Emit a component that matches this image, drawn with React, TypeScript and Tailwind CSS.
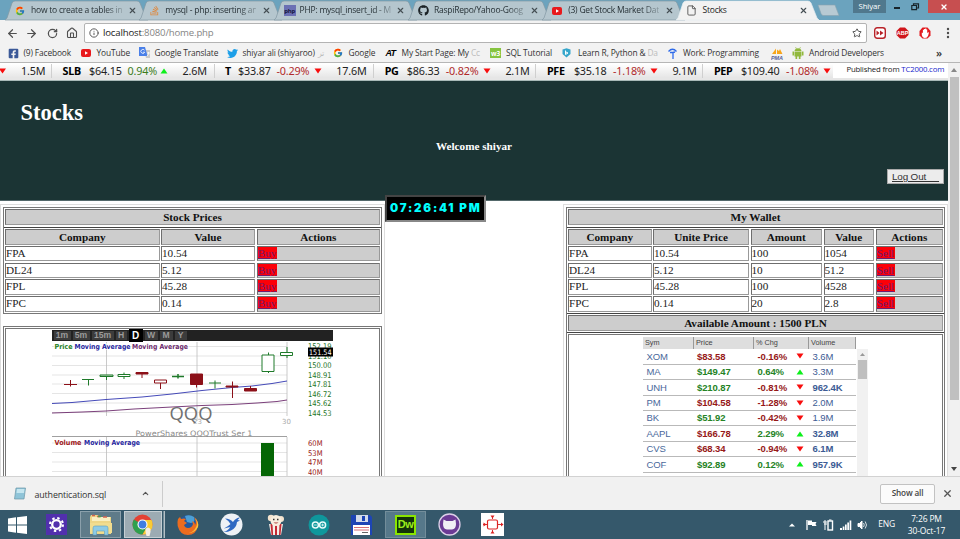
import React from 'react';
import { FcGoogle } from 'react-icons/fc';
import { FaGithub, FaTwitter, FaStackOverflow, FaFacebookSquare } from 'react-icons/fa';
import { ArrowLeft, ArrowRight, RotateCw, House, Info, Star, X, File, ChevronUp } from 'lucide-react';

const ui = "font-['Open_Sans','Noto_Sans',sans-serif]";
const serif = "font-['Liberation_Serif',serif]";
const arial = "font-['Liberation_Sans',sans-serif]";

function YouTube({ className = '' }: { className?: string }) {
  return (
    <svg className={className} viewBox="0 0 20 16" width="10" height="8">
      <rect width="20" height="16" rx="4" fill="#e8191c" />
      <path d="M8 4.5 14 8 8 11.5z" fill="#fff" />
    </svg>
  );
}

function Php() {
  return (
    <span className="flex h-[11px] w-[12px] items-center justify-center bg-[#6b70b4] text-[6px] leading-none font-bold tracking-[-0.2px] text-[#15173c]">
      php
    </span>
  );
}

const tabs = [
  { icon: <FcGoogle size={10} />, title: 'how to create a tables in' },
  { icon: <FaStackOverflow size={11} color="#dd8a42" />, title: 'mysql - php: inserting an' },
  { icon: <Php />, title: 'PHP: mysql_insert_id - M' },
  { icon: <FaGithub size={11} color="#1b2226" />, title: 'RaspiRepo/Yahoo-Goog' },
  { icon: <YouTube />, title: '(3) Get Stock Market Dat' },
  { icon: <File size={11} color="#555" strokeWidth={2} />, title: 'Stocks', active: true },
];

function TabStrip() {
  return (
    <div className="flex h-[20px] bg-[#6ba3be] pl-[5px]">
      {tabs.map((t) => (
        <div key={t.title} className="relative flex h-[20px] w-[134.3px] shrink-0 items-center pt-px pl-[10px]">
          <svg className="absolute top-0 left-0 overflow-visible" width="143" height="20">
            <path
              d="M0 20 L2 18 L7 3 Q8 1 10 1 H132 Q134 1 135 3 L141 18 L143 20z"
              fill={t.active ? '#f2f2f2' : '#b5c6ce'}
              stroke={t.active ? '#e5eef2' : '#8298a3'}
              strokeWidth="0.7"
            />
          </svg>
          <span className="relative flex w-[16px] shrink-0 items-center">{t.icon}</span>
          <span className={`relative w-[91px] overflow-hidden text-[8.5px] tracking-[-0.22px] whitespace-nowrap ${t.active ? 'text-[#222]' : 'bg-gradient-to-r from-[#222c31] from-80% to-[#8e9da4] bg-clip-text text-transparent'}`}>
            {t.title}
          </span>
          <X className="relative ml-[5.500px] shrink-0" size={9} strokeWidth={3} color="#444e53" />
        </div>
      ))}
      <svg className="ml-[5px] shrink-0" width="26" height="20">
        <path d="M2 5h17l4 10.500h-16q-1 0-2-2z" fill="#b8cad3" stroke="#8aa3af" strokeWidth="0.6" />
      </svg>
      <div className="ml-[11px] flex h-[13px] w-[34px] items-center justify-center bg-[#50788d] text-[7.8px] tracking-[-0.1px] text-white">Shiyar</div>
      <div className="ml-[8px] h-[2px] w-[6px] translate-y-[7px] bg-[#17242b]" />
      <svg className="ml-[11px] mt-[3px]" width="9" height="8" fill="none" stroke="#17242b">
        <path d="M2.500 2V.8H7.500V5H6M.8 2.500H5.500V6.700H.8z" strokeWidth="1.200" />
      </svg>
      <div className="ml-[8px] flex h-[13px] w-[33px] items-center justify-center bg-[#c74f50]">
        <X size={8} strokeWidth={4} color="#fff" />
      </div>
    </div>
  );
}

function Toolbar() {
  return (
    <div className="flex h-[25px] items-center bg-[#f2f2f2] pt-px pl-[6px] text-[#505050]">
      <ArrowLeft size={13} strokeWidth={2.2} />
      <ArrowRight className="ml-[6px]" size={13} strokeWidth={2.2} />
      <RotateCw className="ml-[9px]" size={11} strokeWidth={2.7} />
      <House className="ml-[8px]" size={12} strokeWidth={2.2} />
      <div className="ml-[6px] flex h-[20px] w-[783px] items-center rounded-[2px] border border-[#b3b3b3] bg-white pl-[4px] text-[9.6px] tracking-[-0.16px] text-[#858585]">
        <Info size={10} strokeWidth={2.3} color="#555" />
        <span className="ml-[4px]"><span className="text-[#222]">localhost</span>:8080/home.php</span>
        <Star className="mr-[4px] ml-auto" size={10} strokeWidth={2.4} color="#555" />
      </div>
      <svg className="ml-[7px]" width="12" height="12">
        <rect x=".7" y=".7" width="10.600" height="10.600" rx="2.500" fill="#fff" stroke="#b82228" strokeWidth="1.400" />
        <path d="M2.500 3.500 5.500 6 2.500 8.500zM6 3.500 9.500 6 6 8.500z" fill="#b82228" />
      </svg>
      <svg className="ml-[10px]" width="13" height="12">
        <path d="M4 .5h5l3.500 3.500v4L9 11.500H4L.5 8V4z" fill="#d0161b" />
        <text x="6.500" y="8" fontSize="5.500" fontWeight="bold" textAnchor="middle" fill="#fff" fontFamily="Liberation Sans">ABP</text>
      </svg>
      <svg className="ml-[10px]" width="12" height="12">
        <path d="M3.500.5h5L11.500 4v4.500L8.500 11.500h-5L.5 8.500V4z" fill="#e3191e" />
        <path d="M2.800 5.500v2.500q.6 3 3.200 3 2.300 0 3.200-2.500l.8-3-1-.2-.8 1V2.500H7.300V1.500H6.200v.4H5v.8H3.900V6z" fill="#fff" />
      </svg>
      <svg className="ml-[15px]" width="4" height="12" fill="#4b4b4b">
        <circle cx="2" cy="2" r="1.200" /><circle cx="2" cy="6" r="1.200" /><circle cx="2" cy="10" r="1.200" />
      </svg>
    </div>
  );
}

function Bookmark({ width, icon, children }: { width: string; icon: React.ReactNode; children?: React.ReactNode }) {
  return (
    <div className={`flex shrink-0 items-center whitespace-pre ${width}`}>
      <span className="flex w-[16px] shrink-0 items-center">{icon}</span>
      {children}
    </div>
  );
}

function Bookmarks() {
  return (
    <div className="flex h-[18px] items-center border-b border-[#b6b6b6] bg-[#f2f2f2] pl-[7.500px] text-[8.4px] tracking-[-0.14px] text-[#333]">
      <Bookmark width="w-[73px]" icon={<FaFacebookSquare size={11} color="#3b5998" />}>(9) Facebook</Bookmark>
      <Bookmark width="w-[58px]" icon={<YouTube />}>YouTube</Bookmark>
      <Bookmark
        width="w-[88px]"
        icon={
          <svg width="12" height="12">
            <path d="M5 3h6v8H7z" fill="#c9c9c9" /><path d="M0 0h6l2.500 9H0z" fill="#4a80e8" />
            <path d="M5.500 3.200a2 2 0 1 0 .2 2H4M8 6h3M9.500 5v1q0 2-1.500 3" stroke="#fff" strokeWidth=".8" fill="none" />
          </svg>
        }
      >
        Google Translate
      </Bookmark>
      <Bookmark width="w-[106px]" icon={<FaTwitter size={11} color="#1d9fe8" />}>
        shiyar ali (shiyaroo)<span className="ml-[3px] text-[#bbb]">تر</span>
      </Bookmark>
      <Bookmark width="w-[53px]" icon={<FcGoogle size={10} />}>Google</Bookmark>
      <Bookmark width="w-[104.500px]" icon={<span className={`${arial} text-[9px] font-black tracking-[-0.8px] text-black italic`}>AT</span>}>
        My Start Page: My <span className="text-[#bbb]">Cc</span>
      </Bookmark>
      <Bookmark width="w-[72px]" icon={<span className="flex h-[10px] w-[11px] items-center justify-center bg-[#86c440] text-[6.500px] font-bold text-white">w3</span>}>SQL Tutorial</Bookmark>
      <Bookmark
        width="w-[105px]"
        icon={
          <svg width="9" height="10"><path d="M.5 1.500 4.500.3l4 1.200V6L4.500 9.500.5 6z" fill="#36a6cb" /><path d="M3 3.500 6 5 3.500 6.500V2.500" stroke="#fff" fill="none" /></svg>
        }
      >
        Learn R, Python &amp; <span className="text-[#bbb]">Da</span>
      </Bookmark>
      <Bookmark
        width="w-[104px]"
        icon={
          <svg className="ml-[1px]" width="9" height="11" stroke="#2e6bea" fill="none" strokeWidth="1.300"><path d="M.5 3.500Q4.500-1 8.500 3.500M2 4.500h3V11M5 4.500 7 4" /></svg>
        }
      >
        Work: Programming
      </Bookmark>
      <Bookmark
        width="w-[21px]"
        icon={
          <svg className="shrink-0" width="13" height="12"><path d="M1 6 5 .5V6zM6 6V1.500L8 3l1-2 2.500 5z" fill="#f7a51c" /><text x="0" y="11.500" fontSize="5.500" fontWeight="bold" fontStyle="italic" fill="#555f9c" fontFamily="Liberation Sans">PMA</text></svg>
        }
      />
      <Bookmark
        width="w-[144px]"
        icon={
          <svg width="12" height="12" fill="#91b83c">
            <path d="M2.500 4Q3 1.200 6 1.200T9.500 4zM2.500 4.500h7V9.500h-7zM.5 4.500H2V8.500H.5zM10 4.500h1.500V8.500H10zM3.500 9h1.700v3H3.500zM6.800 9h1.700v3H6.800z" />
            <path d="M3.500 0 4.500 2M8.500 0 7.500 2" stroke="#91b83c" strokeWidth=".6" />
          </svg>
        }
      >
        <span className="ml-px">Android Developers</span>
      </Bookmark>
      <span className="-mt-[2px] text-[11px] leading-none font-semibold">»</span>
    </div>
  );
}

function Arrow({ up }: { up: boolean }) {
  return (
    <svg className="shrink-0" width="8" height="6">
      <path d={up ? 'M.5 5.500H7.500L4 .5z' : 'M.5 .5H7.500L4 5.500z'} fill={up ? '#0df01b' : '#f80d0d'} />
    </svg>
  );
}

const quotes = [
  { sym: 'SLB', price: '$64.15', pct: '0.94%', vol: '2.6M', up: true, symW: 'w-[26.500px]', priceW: 'w-[38.500px]', pctW: 'w-[32.500px]', volW: 'w-[31px]' },
  { sym: 'T', price: '$33.87', pct: '-0.29%', vol: '17.6M', up: false, symW: 'w-[13px]', priceW: 'w-[38.500px]', pctW: 'w-[37.200px]', volW: 'w-[37px]' },
  { sym: 'PG', price: '$86.33', pct: '-0.82%', vol: '2.1M', up: false, symW: 'w-[22px]', priceW: 'w-[39px]', pctW: 'w-[37.200px]', volW: 'w-[30px]' },
  { sym: 'PFE', price: '$35.18', pct: '-1.18%', vol: '9.1M', up: false, symW: 'w-[27px]', priceW: 'w-[39px]', pctW: 'w-[37px]', volW: 'w-[30px]' },
  { sym: 'PEP', price: '$109.40', pct: '-1.08%', vol: '', up: false, symW: 'w-[27px]', priceW: 'w-[45px]', pctW: 'w-[37px]', volW: 'w-0' },
];

function Ticker() {
  return (
    <div className="flex h-[16px] items-center bg-gradient-to-b from-white to-[#e6e6e6] to-85% pb-[2px] font-['Noto_Sans',sans-serif] text-[10.8px] leading-[14px] tracking-[-0.18px] whitespace-nowrap text-[#222]">
      <span className="flex w-[21px]"><svg width="7" height="6"><path d="M-1 .500H6L2.500 5.500z" fill="#f80d0d" /></svg></span>
      <span className="w-[30px]">1.5M</span>
      {quotes.map((q) => (
        <div key={q.sym} className="flex shrink-0 items-center border-l border-[#cfcfcf] pl-[10.500px]">
          <b className={`${q.symW} shrink-0 tracking-[-0.3px] text-black`}>{q.sym}</b>
          <span className={`${q.priceW} shrink-0`}>{q.price}</span>
          <span className={`${q.pctW} shrink-0 ${q.up ? 'text-[#3c7d1c]' : 'text-[#b02a2a]'}`}>{q.pct}</span>
          <Arrow up={q.up} />
          <span className={`${q.volW} ml-[14.500px] shrink-0`}>{q.vol}</span>
        </div>
      ))}
      <div className="-ml-[12px] h-[14px] grow bg-white pl-[13px] font-['Open_Sans'] text-[7.8px] leading-[11px] tracking-[-0.18px] text-[#222]">
        Published from <span className="text-[#2026cc]">TC2000.com</span>
      </div>
    </div>
  );
}

function Header() {
  return (
    <header className="flex h-[121px] flex-col border-t border-b border-t-[#a9bab8] border-b-[#53686a] bg-[#1b3434] text-white">
      <h1 className="mt-[19px] pl-[20.500px] text-[22.5px] leading-[25px] font-bold">Stocks</h1>
      <p className="mt-[14px] text-center text-[11.2px] leading-[14px] font-bold">Welcome shiyar</p>
      <button className={`${arial} mt-[16px] mr-[4px] flex h-[15px] w-[57px] items-center self-end border border-[#aaa] bg-[#ececec] pl-[4px] text-[9.9px] leading-[13px] tracking-[-0.15px] whitespace-pre text-[#333] underline`}>
        {'Log Out     '}
      </button>
    </header>
  );
}

const cell = 'border border-t-[#6e6e6e] border-l-[#6e6e6e] border-r-[#999] border-b-[#999] overflow-hidden';
const head = 'border border-t-[#6e6e6e] border-l-[#6e6e6e] border-r-[#999] border-b-[#999] bg-[#cdcdcd] text-center font-bold text-[#111] leading-[14px]';

function Grid({ cols, heads, rows, action }: { cols: string; heads: string[]; rows: string[][]; action: string }) {
  return (
    <div className={`grid ${cols} grid-rows-[16px_15.5px_15.5px_15.5px_15.5px] gap-x-[1.500px] gap-y-[1.300px] p-[1px]`}>
      {heads.map((h) => (
        <div key={h} className={head}>{h}</div>
      ))}
      {rows.map((r) => (
        <React.Fragment key={r[0]}>
          {r.map((v, i) => (
            <div key={i} className={`${cell} bg-white leading-[13.5px] text-[#222]`}>{v}</div>
          ))}
          <div className={`${cell} bg-[#cdcdcd] leading-[13.5px]`}>
            <a className="inline-block h-[12px] bg-[#fc0008] px-[0.3px] leading-[13px] text-[#701a70] underline">{action}</a>
          </div>
        </React.Fragment>
      ))}
    </div>
  );
}

const priceTicks: [number, string][] = [[19, '152.19'], [28.5, '151.10'], [38, '150.00'], [47.5, '148.91'], [57, '147.81'], [66.500, '146.72'], [76, '145.62'], [85.500, '144.53']];
const volumeTicks: [number, string][] = [[116, '60M'], [125.500, '53M'], [135, '47M'], [144.500, '40M']];
const red = '#8c1018';
const green = '#1f7a2a';

function Chart() {
  return (
    <div className="ml-[45.500px] w-[281.500px]">
      <div className={`${arial} flex h-[11px] items-center gap-[2px] bg-[#222] pl-[2px] text-[8.6px] leading-[9px] font-bold text-[#9a9a9a]`}>
        <span className="w-[17px] bg-[#3c3c3c] text-center">1m</span>
        <span className="w-[17px] bg-[#3c3c3c] text-center">5m</span>
        <span className="w-[22px] bg-[#3c3c3c] text-center">15m</span>
        <span className="w-[11px] bg-[#3c3c3c] text-center">H</span>
        <span className="z-10 w-[14px] bg-black text-center text-[10px] leading-[13px] text-white">D</span>
        <span className="w-[13px] bg-[#3c3c3c] text-center">W</span>
        <span className="w-[13px] bg-[#3c3c3c] text-center">M</span>
        <span className="w-[12px] bg-[#3c3c3c] text-center">Y</span>
      </div>
      <svg className="block" width="282" height="138" viewBox="0 11 282 138" fontFamily="DejaVu Sans">
        {[16.500, 26, 35.500, 45, 54, 63.500, 73, 82.500, 113, 122.500, 132, 141.500].map((y) => (
          <path key={y} d={`M0 ${y}H235`} stroke="#dedede" strokeWidth=".8" />
        ))}
        <path d="M54.500 12V86M145 12V91M235 12V86M54.500 107V149M145 107V149M235 107V149" stroke="#bdbdbd" strokeWidth=".8" />
        <path d="M0 106.500H235" stroke="#888" strokeWidth=".8" />
        <path d="M0 73.500 20 72.500 54 69.500 90 67 120 64 150 60.500 180 57.500 200 56 220 53.500 235 51" stroke="#3036b0" fill="none" strokeWidth=".9" />
        <path d="M0 83 30 82 54 81 82 79 120 77 150 75.500 180 74.500 205 73 225 71.500 235 70" stroke="#6c2a6c" fill="none" strokeWidth=".9" />
        <g fontSize="7" fontWeight="bold">
          <rect x="2" y="13" width="135" height="7" fill="#fff" opacity=".6" />
          <text x="2.500" y="18.500" fill="#268126" textLength="18" lengthAdjust="spacingAndGlyphs">Price</text>
          <text x="22.500" y="18.500" fill="#2626a0" textLength="56" lengthAdjust="spacingAndGlyphs">Moving Average</text>
          <text x="80" y="18.500" fill="#6c2a6c" textLength="56" lengthAdjust="spacingAndGlyphs">Moving Average</text>
          <text x="2.500" y="115" fill="#a01818" textLength="27" lengthAdjust="spacingAndGlyphs">Volume</text>
          <text x="32" y="115" fill="#2626a0" textLength="56" lengthAdjust="spacingAndGlyphs">Moving Average</text>
        </g>
        <g strokeWidth="1">
          <path d="M12 54.500H25M18.500 50V56.500" stroke={red} />
          <path d="M30 49.500H42M36.500 49V55.500" stroke={green} />
          <path d="M48 45h13v1.500H48zM54.500 47v3" stroke={green} fill="#cfe3cf" />
          <path d="M66 44.500h12v2H66zM72 42.500v2M72 47v2" stroke={green} fill="#fff" />
          <path d="M84 42.500h12v1.500H84zM90 44v4" stroke={red} fill={red} />
          <path d="M102.500 50h12v3h-12zM108.500 53v6" stroke={red} fill="#fff" />
          <path d="M120 46.500h12M126 44v4.500" stroke={green} strokeWidth="1.500" />
          <path d="M138.500 44h12v10.500h-12zM144.500 55v2.500" stroke={red} fill={red} />
          <path d="M157 53h12M163 50.500V58.500" stroke={green} />
          <path d="M174 56h12v1h-12zM180.500 51.500V68" stroke={red} fill={red} />
          <path d="M192.500 58.500h12v2.500h-12zM198.500 56v3" stroke={red} fill={red} />
          <path d="M210 25h12v16.500h-12zM216.500 22.500V25M216.500 42v1" stroke={green} fill="#fff" />
          <path d="M228.500 22.500h12v3h-12zM235 17v5M235 26v2" stroke={green} fill="#fff" />
        </g>
        <rect x="209" y="113" width="13" height="36" fill="#056605" />
        <text x="141" y="94" fontSize="7" fill="#aaa">23</text>
        <text x="230" y="94" fontSize="7" fill="#aaa">30</text>
        <text x="117.500" y="90" fontSize="19" fill="#707070" textLength="43" lengthAdjust="spacingAndGlyphs" fontFamily="Open Sans">QQQ</text>
        <text x="83.500" y="105.500" fontSize="7.500" fill="#8a8a8a" textLength="117" lengthAdjust="spacingAndGlyphs">PowerShares QQQTrust Ser 1</text>
        {priceTicks.map(([y, s]) => (
          <text key={s} x="256" y={y} fontSize="7.800" fill="#1e741e" textLength="23.500" lengthAdjust="spacingAndGlyphs">{s}</text>
        ))}
        {volumeTicks.map(([y, s]) => (
          <text key={s} x="256" y={y} fontSize="7.800" fill="#982020" textLength="14.500" lengthAdjust="spacingAndGlyphs">{s}</text>
        ))}
        <rect x="256" y="17.500" width="25" height="9" fill="#000" />
        <text x="257" y="25" fontSize="7.500" fill="#fff" textLength="22.500" lengthAdjust="spacingAndGlyphs">151.54</text>
      </svg>
    </div>
  );
}

const watch = [
  { sym: 'XOM', price: '$83.58', chg: '-0.16%', vol: '3.6M' },
  { sym: 'MA', price: '$149.47', chg: '0.64%', vol: '3.3M' },
  { sym: 'UNH', price: '$210.87', chg: '-0.81%', vol: '962.4K', bold: true },
  { sym: 'PM', price: '$104.58', chg: '-1.28%', vol: '2.0M' },
  { sym: 'BK', price: '$51.92', chg: '-0.42%', vol: '1.9M' },
  { sym: 'AAPL', price: '$166.78', chg: '2.29%', vol: '32.8M', bold: true },
  { sym: 'CVS', price: '$68.34', chg: '-0.94%', vol: '6.1M', bold: true },
  { sym: 'COF', price: '$92.89', chg: '0.12%', vol: '957.9K', bold: true },
];
const greenPrices = ['MA', 'UNH', 'BK', 'COF'];

function WatchList() {
  return (
    <div className={`${arial} mt-[1.500px] ml-[74px] w-[225px]`}>
      <div className="flex h-[12.500px] w-[213px] bg-[#dedede] text-[7.3px] leading-[12px] text-[#444]">
        <span className="w-[50px] pl-[2px]">Sym</span>
        <span className="w-[60px] border-l border-[#999] pl-[2px]">Price</span>
        <span className="w-[55px] border-l border-[#999] pl-[2px]">% Chg</span>
        <span className="w-[47.500px] border-x border-[#999] pl-[2px]">Volume</span>
      </div>
      <div className="flex">
        <div className="w-[212.500px] text-[9.5px] tracking-[-0.1px]">
          {watch.map((w) => {
            const up = !w.chg.startsWith('-');
            return (
              <div key={w.sym} className="flex h-[15.450px] items-center border-b border-[#b9b9b9] leading-none">
                <span className="w-[54px] pl-[3.500px] text-[#49689b]">{w.sym}</span>
                <b className={`w-[60.500px] ${greenPrices.includes(w.sym) ? 'text-[#258325]' : 'text-[#961818]'}`}>{w.price}</b>
                <b className={`w-[38.500px] ${up ? 'text-[#258325]' : 'text-[#961818]'}`}>{w.chg}</b>
                <Arrow up={up} />
                <span className={`ml-[8.500px] text-[#3c5b94] ${w.bold ? 'font-bold' : ''}`}>{w.vol}</span>
              </div>
            );
          })}
        </div>
        <div className="ml-[1px] -mb-[8px] flex w-[11px] flex-col items-center bg-[#f1f1f1] pt-[4px]">
          <svg width="5" height="3"><path d="M0 3h5L2.500 0z" fill="#999" /></svg>
          <div className="mt-[4px] h-[19px] w-[9px] bg-[#bfbfbf]" />
        </div>
      </div>
    </div>
  );
}

const bar = 'border border-t-[#6e6e6e] border-l-[#6e6e6e] border-r-[#999] border-b-[#999] bg-[#cdcdcd] text-center font-bold text-[#111]';

function StockPrices() {
  return (
    <section className="h-[300px] w-[385px] border border-[#ddd] pt-[2px] pl-[2px]">
      <div className="w-[379px] border border-[#777] text-[11.2px]">
        <div className="h-[19.500px] border-b border-[#444] p-[1px]">
          <div className={`${bar} h-[16px] leading-[14px]`}>Stock Prices</div>
        </div>
        <Grid
          cols="grid-cols-[154.500px_94px_1fr]"
          heads={['Company', 'Value', 'Actions']}
          rows={[['FPA', '10.54'], ['DL24', '5.12'], ['FPL', '45.28'], ['FPC', '0.14']]}
          action="Buy"
        />
      </div>
      <div className="mt-[12px] h-[200px] w-[379px] border border-[#777] p-[1px]">
        <div className="h-[198px] border border-[#777] pt-[1px]">
          <Chart />
        </div>
      </div>
    </section>
  );
}

function Wallet() {
  return (
    <section className="ml-auto h-[300px] w-[385px] border border-[#ddd] pt-[2px] pl-[2px]">
      <div className="w-[379px] border border-[#777] text-[11.2px]">
        <div className="h-[19.500px] border-b border-[#444] p-[1px]">
          <div className={`${bar} h-[16px] leading-[14px]`}>My Wallet</div>
        </div>
        <Grid
          cols="grid-cols-[83.500px_96px_71.500px_50.500px_1fr]"
          heads={['Company', 'Unite Price', 'Amount', 'Value', 'Actions']}
          rows={[['FPA', '10.54', '100', '1054'], ['DL24', '5.12', '10', '51.2'], ['FPL', '45.28', '100', '4528'], ['FPC', '0.14', '20', '2.8']]}
          action="Sell"
        />
        <div className="h-[20.500px] border-y border-[#444] p-[1px]">
          <div className={`${bar} h-[16.500px] leading-[15px]`}>Available Amount : 1500 PLN</div>
        </div>
        <div className="p-[1px]">
          <div className="h-[180px] border border-[#777]">
            <WatchList />
          </div>
        </div>
      </div>
    </section>
  );
}

function Downloads() {
  return (
    <div className="flex h-[34px] items-center border-t border-[#d2d2d2] bg-[#f1f1f1]">
      <svg className="ml-[14px]" width="12" height="13">
        <path d="M2 1h9.500L10 12H.5z" fill="#8fc4d8" stroke="#6c97a8" strokeWidth=".7" />
        <path d="M3 2h7.500L10 6H2.500z" fill="#c5e6f0" />
      </svg>
      <span className="ml-[8.500px] w-[106px] pt-[2px] text-[8.9px] tracking-[-0.15px] text-[#333]">authentication.sql</span>
      <ChevronUp size={9} strokeWidth={3} color="#555" />
      <div className="ml-[12px] h-[26px] w-px bg-[#ccc]" />
      <div className="ml-auto flex h-[20px] w-[55px] items-center justify-center rounded-[2px] border border-[#c2c2c2] bg-[#fbfbfb] text-[8.200px] font-semibold tracking-[-0.15px] text-[#444]">Show all</div>
      <X className="mr-[7px] ml-[7px]" size={11} strokeWidth={2.8} color="#555" />
    </div>
  );
}

function Taskbar() {
  return (
    <div className="flex h-[29px] items-center bg-[#35586b] text-white">
      <svg className="ml-[8px]" width="19" height="18" fill="#fff">
        <path d="M0 2.500 8 1.300V8.500H0zM9 1.200 19 0V8.500H9zM0 9.500H8V16.700L0 15.500zM9 9.500H19V18L9 16.800z" />
      </svg>
      <svg className="ml-[19px]" width="21" height="21">
        <rect width="21" height="21" fill="#5130ad" />
        <g stroke="#fff" fill="none">
          <circle cx="10.500" cy="10.500" r="4.300" strokeWidth="2.300" />
          <circle cx="10.500" cy="10.500" r="6.500" strokeWidth="2" strokeDasharray="2.400 2.705" />
        </g>
      </svg>
      <div className="ml-[13px] flex h-[27px] w-[41px] items-center justify-center border border-[#8ba0ab] bg-[#5f7b89]">
        <svg width="24" height="22">
          <path d="M1 3 2 1h7l1 2h12v17H1z" fill="#eed686" />
          <path d="M3 3h18v4H3z" fill="#f9efc2" />
          <path d="M3 1.500h3M8 2.500h3M14 3h4" stroke="#d36550" strokeWidth="1.500" />
          <path d="M9 2.500h3" stroke="#4b9d4b" strokeWidth="1.500" />
          <path d="M1 9h22v10H1z" fill="#f2dd8f" />
          <path d="M4 21v-7q0-2 2-2h11q2 0 2 2v7h-3.500v-4h-8v4z" fill="#8ecbe6" stroke="#5d9fc0" strokeWidth=".6" />
        </svg>
      </div>
      <div className="ml-[3px] flex h-[27px] w-[38px] items-center justify-center border border-[#c4ced3] bg-[#9cabb3]">
        <svg width="22" height="22">
          <circle cx="10.500" cy="10.500" r="10" fill="#e34133" />
          <path d="M10.500 10.500 1.840 5.500A10 10 0 0 0 10.500 20.500L15 13z" fill="#2fa04e" />
          <path d="M10.500 10.500 15 13 10.500 20.500A10 10 0 0 0 19.500 6h-9z" fill="#f9cc32" />
          <circle cx="10.500" cy="10.500" r="5" fill="#fff" />
          <circle cx="10.500" cy="10.500" r="3.900" fill="#3f7de0" />
          <path d="M13.500 15q2.500-3 5 0v3l-1 4h-3l-1-4z" fill="#f5efe4" />
        </svg>
      </div>
      <div className="ml-[1px] h-[27px] w-[2px] border-r border-[#b4c0c6] bg-[#718b98]" />
      <svg className="ml-[12px]" width="22" height="22">
        <circle cx="11" cy="11" r="10" fill="#24589c" />
        <path d="M8 2q5-2 9 1 2 5-3 6l-4-1z" fill="#4c9fd6" />
        <path d="M1 5 3 3l1 2q3-1 5 0L7 7l3 2-3 2q1 3 4 3 4 0 5-4l-1-3q3 1 3 4 2-3-1-8 5 4 4 9-2 9-10 9T.700 12Q0 8 1 5z" fill="#ec6c1f" />
        <path d="M18 4q4 6 0 11-3 4-7 4 7 0 10-6 1-5-3-9z" fill="#fac23a" />
      </svg>
      <svg className="ml-[21px]" width="23" height="23">
        <circle cx="11.500" cy="11.500" r="11" fill="#eef1f5" />
        <path d="M5 5.500q5 0 8 3.500 3-4.500 7-4.500l-2.500 2.500 2.500.5-3 1.500q-.5 6-6 8.500-4 2-7.500 1.500 5-1.500 6.500-5l-6 1.500q4-2 6.500-4.500-2-3.500-5.500-5.500z" fill="#2e68c2" />
      </svg>
      <svg className="ml-[24px]" width="18" height="22">
        <path d="M2 10h14l-2 11H4z" fill="#f6eee8" />
        <path d="M3.500 10h2l.6 11H4.500zM8 10h2v11H8zM12.500 10h2l-1 11h-1.500z" fill="#c42a34" />
        <circle cx="4" cy="4" r="3.200" fill="#f4e4cf" /><circle cx="14" cy="5" r="3" fill="#f4e4cf" />
        <circle cx="9" cy="6.500" r="5.500" fill="#f7eedf" />
        <path d="M6 5.500h1.500M10 5.500h1.500" stroke="#333" strokeWidth="1.500" /><path d="M6.500 8.500q2.500 2 5 0z" fill="#a33" />
      </svg>
      <svg className="ml-[23px]" width="22" height="22">
        <circle cx="11" cy="11" r="10.500" fill="#0f979c" />
        <circle cx="7.400" cy="11" r="3" stroke="#e8fbfa" strokeWidth="1.500" fill="none" />
        <circle cx="14.600" cy="11" r="3" stroke="#e8fbfa" strokeWidth="1.500" fill="none" />
        <path d="M6 11h2.800M13.200 11H16M14.600 9.600v2.800" stroke="#e8fbfa" strokeWidth=".8" />
      </svg>
      <svg className="ml-[21px]" width="21" height="22">
        <path d="M0 1h19l2 2v18H0z" fill="#1d45b5" />
        <rect x="5" y="1" width="12" height="7" fill="#d3dbea" /><rect x="11" y="2" width="3" height="5" fill="#1d45b5" />
        <rect x="2" y="11" width="17" height="10" fill="#fff" />
        <path d="M3 13.500h15M3 16h15" stroke="#d67078" /><path d="M11 18.500h6" stroke="#666" />
      </svg>
      <div className="ml-[13px] flex h-[27px] w-[41px] items-center justify-center border border-[#728d9a] bg-[#56788a]">
        <span className={`${arial} flex h-[20px] w-[21px] items-center justify-center border-2 border-[#8ae600] bg-[#14330a] text-[11px] font-bold tracking-[-0.6px] text-[#9bee1c]`}>Dw</span>
      </div>
      <svg className="ml-[12px]" width="23" height="23">
        <circle cx="11.500" cy="11.500" r="10.500" fill="#6b3a95" stroke="#dccfe8" strokeWidth="1.300" />
        <path d="M5.500 6.500 8.500 8h6l3-1.500.5 4.500q0 5-4 5.500H9q-4-.500-4-5.500z" fill="#f1eef5" />
      </svg>
      <svg className="ml-[20px]" width="23" height="23">
        <rect width="23" height="23" fill="#fff" />
        <path d="M11.500 3v3M11.500 17v3M2 11.500h4M17 11.500h4" stroke="#c33" />
        <rect x="6.500" y="7" width="10" height="9" rx="1.500" fill="#fff" stroke="#d22" strokeWidth="1.200" />
        <path d="M9.500 2.500h4L11.500 5.500zM9.500 20.500h4L11.500 17.500zM2.500 9.500v4L5.500 11.500zM20 9.500v4L22.500 11.500z" fill="#d22" />
      </svg>
      <svg className="ml-auto" width="6" height="4"><path d="M0 3.500h6L3 .5z" fill="#fff" /></svg>
      <svg className="ml-[11px]" width="12" height="12"><path d="M1 1v10" stroke="#fff" strokeWidth="1.300" /><path d="M2 1.500h4v1.500h4.500L9.500 5l1 2H6V6H2z" fill="#fff" /></svg>
      <svg className="ml-[5px]" width="12" height="12" stroke="#fff" fill="none"><rect x="5" y="2" width="4.500" height="9" strokeWidth="1.400" /><path d="M6 1h2.500M0 3h4M2 1v10M1 5h3" /></svg>
      <svg className="ml-[5px]" width="12" height="12" fill="#fff"><path d="M0 9h2v2H0zM2.700 7.500h1.700V11H2.700zM5 5.500h1.700V11H5zM7.300 3.500H9V11H7.300zM9.600 1.500h1.700V11H9.600z" /></svg>
      <svg className="ml-[5px]" width="11" height="12" fill="none" stroke="#fff"><path d="M1 4.500h1.500L5 2v8L2.500 7.500H1z" fill="#fff" /><path d="M6.500 4q1.500 2 0 4M8.200 2.500q2.600 3.500 0 7" strokeWidth=".8" /></svg>
      <span className="ml-[10px] text-[8.500px] tracking-[-0.2px]">ENG</span>
      <div className="mr-[14.500px] ml-[12.500px] w-[38px] pt-px text-center text-[8.500px] leading-[12px] tracking-[-0.15px] whitespace-nowrap">
        <div>7:26 PM</div>
        <div>30-Oct-17</div>
      </div>
    </div>
  );
}

export default function App() {
  return (
    <div className={`${ui} flex h-[539px] w-[960px] flex-col overflow-hidden bg-white`}>
      <TabStrip />
      <Toolbar />
      <Bookmarks />
      <div className="flex h-[413px] shrink-0 overflow-hidden">
        <main className={`${serif} relative h-[413px] w-[948px] overflow-hidden bg-white`}>
          <div className="h-[17px] pt-[1px]"><Ticker /></div>
          <Header />
          <div className="flex pt-[3px]">
            <StockPrices />
            <Wallet />
          </div>
          <div className="absolute top-[132px] left-[385px] flex h-[27px] w-[101px] items-center border-2 border-t-[#444] border-r-[#888] border-b-[#888] border-l-[#444] bg-black pl-[3px] font-['Inter'] text-[11.500px] font-black tracking-[1.800px] whitespace-nowrap text-[#0ff]">
            07:26:41 PM
          </div>
        </main>
        <div className="flex w-[12px] flex-col items-center bg-[#f1f1f1] pt-[5px]">
          <svg width="6" height="4"><path d="M0 4h6L3 0z" fill="#888" /></svg>
          <div className="mt-[5px] h-[323px] w-[9px] bg-[#c0c0c0]" />
          <svg className="mt-auto mb-[5px]" width="6" height="4"><path d="M0 0h6L3 4z" fill="#444" /></svg>
        </div>
      </div>
      <Downloads />
      <Taskbar />
    </div>
  );
}
